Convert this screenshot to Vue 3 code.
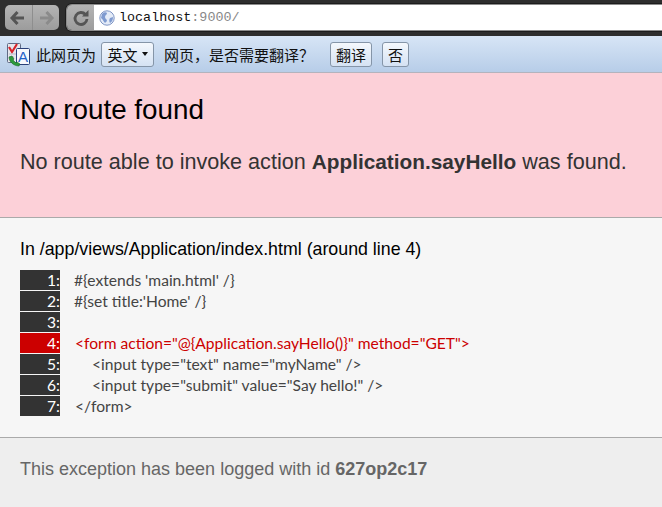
<script setup>
const lines = [
  { n: 1, text: "#{extends 'main.html' /}", indent: 0 },
  { n: 2, text: "#{set title:'Home' /}", indent: 0 },
  { n: 3, text: '', indent: 0 },
  { n: 4, text: '<form action="@{Application.sayHello()}" method="GET">', indent: 1, error: true },
  { n: 5, text: '<input type="text" name="myName" />', indent: 18 },
  { n: 6, text: '<input type="submit" value="Say hello!" />', indent: 18 },
  { n: 7, text: '</form>', indent: 1 }
]
</script>

<template>
  <div class="page">
    <div class="toolbar">
      <div class="nav-group">
        <span class="nav-btn">
          <svg width="18" height="16" viewBox="0 0 18 16"><path d="M8.500 2 3 8l5.500 6M4 8h11" fill="none" stroke="#555" stroke-width="3"/></svg>
        </span>
        <span class="nav-btn last">
          <svg width="18" height="16" viewBox="0 0 18 16"><path d="M9.500 2 15 8l-5.500 6M14 8H3" fill="none" stroke="#8b8b8b" stroke-width="3"/></svg>
        </span>
      </div>
      <div class="omnibox">
        <span class="reload">
          <svg width="18" height="18" viewBox="0 0 18 18"><path d="M13.500 5.500A6 6 0 1 0 15 10" fill="none" stroke="#555" stroke-width="2.800"/><path d="M10 7.500h6.500V1z" fill="#555"/></svg>
        </span>
        <span class="address">
          <svg class="globe" width="16" height="16" viewBox="0 0 16 16">
            <circle cx="8" cy="8" r="7.200" fill="#e4ebf7" stroke="#7d94c4"/>
            <path d="M3 4c2-2 4-2 5-1 0 2-2 2-2 4 0 2 2 2 2 4l-2 2C4 11 4 9 2 8zM11 8l3-1c0 3-1 5-3 6-1-2-1-3 0-5z" fill="#7f9bd0"/>
          </svg>
          <span class="url">localhost<span class="url-dim">:9000/</span></span>
        </span>
      </div>
    </div>

    <div class="infobar">
      <svg class="translate-icon" width="25" height="25" viewBox="0 0 25 25">
        <rect x="1.500" y="1.500" width="13" height="19" rx="1" fill="#e6e6ec" stroke="#5f6a84"/>
        <path d="M3 5l3 5 5-8" fill="none" stroke="#d8232a" stroke-width="2.200"/>
        <path d="M3 12h7M3 15h5" stroke="#b9b9c6"/>
        <rect x="10.500" y="6.500" width="13" height="16" rx="1" fill="#f6f8fd" stroke="#2a3f78"/>
        <text class="icon-a" x="17" y="20" text-anchor="middle">A</text>
        <path d="M3 15l3-1 2 3-1 1 3 3 1-1 3 2-1 2c-5 0-10-4-10-9z" fill="#2d9a3c" stroke="#1d6b2a" stroke-width=".6"/>
      </svg>
      <span class="info-text">此网页为</span>
      <span class="info-btn lang">英文<i class="caret"></i></span>
      <span class="info-text after">网页，是否需要翻译？</span>
      <span class="info-btn yes">翻译</span>
      <span class="info-btn no">否</span>
    </div>

    <header class="error-head">
      <h1>No route found</h1>
      <p>No route able to invoke action <strong>Application.sayHello</strong> was found.</p>
    </header>

    <section class="source">
      <h2>In /app/views/Application/index.html (around line 4)</h2>
      <div class="code">
        <div v-for="l in lines" :key="l.n" class="row" :class="{ error: l.error }">
          <span class="num">{{ l.n }}:</span>
          <pre class="src" :style="{ paddingLeft: l.indent + 'px' }">{{ l.text }}</pre>
        </div>
      </div>
    </section>

    <footer class="foot">This exception has been logged with id <strong>627op2c17</strong></footer>
  </div>
</template>

<style>
html, body { margin: 0; background: #eee; }
</style>

<style scoped>
.page {
  width: 662px;
  height: 507px;
  overflow: hidden;
  font-family: "Liberation Sans", Arial, sans-serif;
  display: flex;
  flex-direction: column;
}
.toolbar {
  height: 36px;
  box-sizing: border-box;
  background: #2e2e2e;
  padding: 5px 0 0 5px;
  display: flex;
  gap: 7px;
  align-items: flex-start;
  flex: none;
}
.nav-group {
  width: 54px;
  height: 25px;
  display: flex;
  border-radius: 5px;
  overflow: hidden;
  background: linear-gradient(#b4b4b4, #9c9c9c);
}
.nav-btn {
  flex: 1;
  display: flex;
  align-items: center;
  justify-content: center;
  border-right: 1px solid #8e8e8e;
}
.nav-btn.last { border-right: 0; }
.omnibox {
  flex: 1;
  height: 27px;
  margin-top: -1px;
  box-sizing: border-box;
  display: flex;
  border: 1px solid #8c8c8c;
  border-right: 0;
  border-radius: 6px 0 0 6px;
  overflow: hidden;
  box-shadow: 0 0 0 1px #1d1d1d;
}
.reload {
  width: 27px;
  display: flex;
  align-items: center;
  justify-content: center;
  background: linear-gradient(#b4b4b4, #9c9c9c);
}
.address {
  flex: 1;
  background: #fff;
  display: flex;
  align-items: center;
  padding-left: 5px;
  gap: 4px;
}
.url {
  font-family: "Liberation Mono", monospace;
  font-size: 13.400px;
  color: #111;
}
.url-dim { color: #888; }
.infobar {
  height: 37px;
  box-sizing: border-box;
  background: linear-gradient(#d7e5f6, #b7cde8);
  border-bottom: 1px solid #b3b3bd;
  display: flex;
  align-items: center;
  padding: 0 0 0 6px;
  font-family: "Noto Sans CJK SC", sans-serif;
  font-size: 15px;
  color: #111;
  flex: none;
}
.translate-icon { margin-right: 5px; flex: none; }
.icon-a {
  font-family: "Liberation Sans", sans-serif;
  font-size: 15px;
  font-weight: 400;
  fill: #1f62c9;
}
.info-btn {
  height: 25px;
  box-sizing: border-box;
  border: 1px solid #8595a8;
  border-radius: 3px;
  background: linear-gradient(#f4f8fd, #d5e2f3);
  display: inline-flex;
  align-items: center;
  justify-content: center;
}
.lang { width: 53px; margin-left: 5px; gap: 4px; }
.caret {
  width: 0;
  height: 0;
  border: 3.500px solid transparent;
  border-top: 4px solid #111;
  border-bottom: 0;
}
.after { margin-left: 10px; }
.yes { width: 42px; margin-left: 16px; }
.no { width: 27px; margin-left: 10px; }
.error-head {
  height: 145px;
  box-sizing: border-box;
  background: #fcd0d8;
  border-bottom: 1px solid #aaa;
  padding: 20px 20px 0;
  flex: none;
}
h1 {
  margin: 0;
  font-size: 27.800px;
  line-height: 33px;
  font-weight: 400;
  color: #000;
}
.error-head p {
  margin: 24px 0 0;
  font-size: 21.600px;
  line-height: 24px;
  color: #333;
}
.error-head strong { font-weight: 700; font-size: 20.800px; }
.source {
  height: 220px;
  box-sizing: border-box;
  background: #f6f6f6;
  border-bottom: 1px solid #aaa;
  padding: 21px 20px 0;
  flex: none;
}
h2 {
  margin: 0;
  font-size: 17.800px;
  line-height: 20px;
  font-weight: 400;
  color: #000;
}
.code { margin-top: 11px; display: flex; flex-direction: column; gap: 1px; }
.row { display: flex; height: 20px; }
.num {
  width: 40px;
  box-sizing: border-box;
  background: #333;
  color: #fff;
  text-align: right;
  font-family: Lato, sans-serif;
  font-size: 15.600px;
  line-height: 20px;
}
.src {
  margin: 0 0 0 14px;
  font-family: Lato, sans-serif;
  font-size: 15.600px;
  line-height: 20px;
  color: #444;
  white-space: pre;
}
.error .num { background: #c00; }
.error .src { color: #c00; }
.foot {
  flex: 1;
  background: #eee;
  padding: 21px 20px 0;
  font-size: 18px;
  line-height: 20px;
  color: #666;
}
.foot strong { color: #666; }
</style>
